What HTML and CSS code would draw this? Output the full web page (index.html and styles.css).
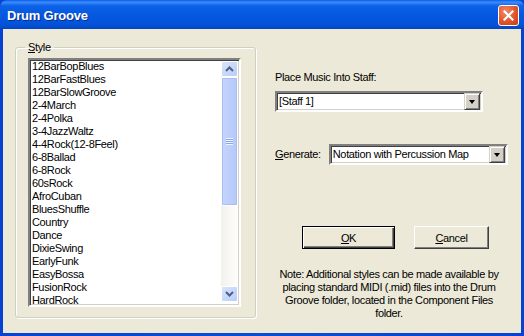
FILE: index.html
```html
<!DOCTYPE html>
<html>
    <head>
        <title>Drum Groove</title>
        <meta name="viewport" content="width=device-width, initial-scale=1">
        <link rel="stylesheet" href="styles.css">
    </head>
    <body>
        <div class="window">
            <div class="titlebar">
                <span class="title">Drum Groove</span>
                <button class="close" aria-label="Close">
                    <svg width="11" height="11" viewBox="0 0 11 11">
                        <path d="M1.5 1.5 L9.5 9.5 M9.5 1.5 L1.5 9.5" stroke="#fff" stroke-width="2.2" stroke-linecap="square"/>
                    </svg>
                </button>
            </div>

            <div class="content">
                <fieldset class="group">
                    <legend><u>S</u>tyle</legend>
                    <div class="listbox">
                        <ul class="items">
                            <li>12BarBopBlues</li>
                            <li>12BarFastBlues</li>
                            <li>12BarSlowGroove</li>
                            <li>2-4March</li>
                            <li>2-4Polka</li>
                            <li>3-4JazzWaltz</li>
                            <li>4-4Rock(12-8Feel)</li>
                            <li>6-8Ballad</li>
                            <li>6-8Rock</li>
                            <li>60sRock</li>
                            <li>AfroCuban</li>
                            <li>BluesShuffle</li>
                            <li>Country</li>
                            <li>Dance</li>
                            <li>DixieSwing</li>
                            <li>EarlyFunk</li>
                            <li>EasyBossa</li>
                            <li>FusionRock</li>
                            <li>HardRock</li>
                        </ul>
                        <div class="scrollbar">
                            <div class="sb-btn">
                                <svg width="9" height="6" viewBox="0 0 9 6"><path d="M1 5 L4.5 1.5 L8 5" fill="none" stroke="#4d6185" stroke-width="2"/></svg>
                            </div>
                            <div class="sb-track">
                                <div class="sb-thumb">
                                    <span class="grip"></span>
                                </div>
                            </div>
                            <div class="sb-btn">
                                <svg width="9" height="6" viewBox="0 0 9 6"><path d="M1 1 L4.5 4.5 L8 1" fill="none" stroke="#4d6185" stroke-width="2"/></svg>
                            </div>
                        </div>
                    </div>
                </fieldset>

                <div class="side">
                    <div class="label">Place Music Into Staff:</div>
                    <div class="combo staff">
                        <span class="value">[Staff 1]</span>
                        <span class="drop"><span class="tri"></span></span>
                    </div>

                    <div class="gen-row">
                        <span class="label"><u>G</u>enerate:</span>
                        <div class="combo generate">
                            <span class="value">Notation with Percussion Map</span>
                            <span class="drop"><span class="tri"></span></span>
                        </div>
                    </div>

                    <div class="buttons">
                        <button class="btn ok"><span><u>O</u>K</span></button>
                        <button class="btn cancel"><u>C</u>ancel</button>
                    </div>

                    <p class="note">Note: Additional styles can be made available by placing standard MIDI (.mid) files into the Drum Groove folder, located in the Component Files folder.</p>
                </div>
            </div>
        </div>
    </body>
</html>
```

FILE: styles.css
```css
body, html {
    margin: 0;
    width: 524px;
    height: 336px;
    overflow: hidden;
    background-color: #ece9d8;
}

.window {
    width: 524px;
    height: 336px;
    box-sizing: border-box;
    display: flex;
    flex-direction: column;
    background-color: #0a246a;
    background: linear-gradient(to right, #0842d4, #0a4ed8 50%, #0842d4);
    font-family: "Liberation Sans", Arial, sans-serif;
    font-size: 11px;
    letter-spacing: -0.35px;
    color: #000;
    padding: 0 3px 3px 3px;
}

/* title bar */
.titlebar {
    height: 29px;
    margin: 0 -3px;
    padding: 0 5px 0 7px;
    display: flex;
    align-items: center;
    justify-content: space-between;
    background: linear-gradient(to bottom, #0a5ff2 0%, #3d8bf7 8%, #0b62e8 20%, #0558e0 50%, #0353d8 85%, #0345c2 100%);
    border-radius: 7px 7px 0 0;
}

.title {
    color: white;
    font-weight: bold;
    font-size: 13px;
    letter-spacing: -0.2px;
    text-shadow: 1px 1px 0 #0a2e8c;
    margin-top: 1px;
}

.close {
    width: 21px;
    height: 21px;
    padding: 0;
    margin-top: 1px;
    border: 1px solid #fff;
    border-radius: 3px;
    background: radial-gradient(circle at 35% 30%, #f08a6a, #e2542c 55%, #c53c15);
    display: flex;
    align-items: center;
    justify-content: center;
}

/* client area */
.content {
    flex: 1;
    display: flex;
    background-color: #ece9d8;
}

.group {
    margin: 12px 0 0 12px;
    width: 241px;
    height: 277px;
    box-sizing: border-box;
    padding: 0;
    border: 1px solid #d0d0bf;
    border-radius: 3px;
    box-shadow: inset 1px 1px 0 #fff, 1px 1px 0 #fff;
}

.group legend {
    padding: 0 3px;
    margin-left: 9px;
    line-height: 13px;
}

.listbox {
    display: flex;
    margin: 4px 0 0 12px;
    width: 213px;
    height: 249px;
    box-sizing: border-box;
    border: 2px solid;
    border-color: #808080 #fff #fff #808080;
    box-shadow: inset 1px 1px 0 #404040, inset -1px -1px 0 #d4d0c8;
    background: white;
    overflow: hidden;
}

.items {
    flex: 1;
    list-style: none;
    margin: 0;
    padding: 0 0 0 2px;
}

.items li {
    height: 13px;
    line-height: 13px;
    white-space: nowrap;
}

/* xp scrollbar */
.scrollbar {
    width: 17px;
    margin: 1px 1px 3px 0;
    display: flex;
    flex-direction: column;
    background: linear-gradient(to right, #f3f1ec, #fefefb);
}

.sb-btn {
    height: 16px;
    box-sizing: border-box;
    border: 1px solid #fff;
    border-radius: 2px;
    background: linear-gradient(to bottom right, #d8e4fd, #b9cdfa);
    display: flex;
    align-items: center;
    justify-content: center;
}

.sb-track {
    flex: 1;
}

.sb-thumb {
    height: 129px;
    box-sizing: border-box;
    border: 1px solid #fff;
    outline: 1px solid #a8bdf0;
    outline-offset: -2px;
    border-radius: 2px;
    background: linear-gradient(to right, #c5d5fd, #bbcdfb 60%, #b5c8f8);
    display: flex;
    align-items: center;
    justify-content: center;
}

.grip {
    width: 7px;
    height: 7px;
    background: repeating-linear-gradient(to bottom, #eef3fe 0 1px, #8aa6e8 1px 2px);
}

/* right column */
.side {
    margin-left: 19px;
    width: 233px;
    padding-top: 42px;
}

.label {
    line-height: 13px;
}

.combo {
    height: 21px;
    box-sizing: border-box;
    border: 2px solid;
    border-color: #808080 #fff #fff #808080;
    box-shadow: inset 1px 1px 0 #404040, inset -1px -1px 0 #d4d0c8;
    background: white;
    display: flex;
    align-items: center;
    justify-content: space-between;
    padding: 0 1px 0 2px;
}

.combo .value {
    line-height: 13px;
    white-space: nowrap;
}

.staff {
    width: 208px;
    margin-top: 7px;
}

.drop {
    width: 16px;
    height: 17px;
    box-sizing: border-box;
    background: #d4d0c8;
    border: 1px solid;
    border-color: #d4d0c8 #404040 #404040 #d4d0c8;
    box-shadow: inset 1px 1px 0 #fff, inset -1px -1px 0 #808080;
    display: flex;
    align-items: center;
    justify-content: center;
}

.tri {
    width: 0;
    height: 0;
    border-left: 3.5px solid transparent;
    border-right: 3.5px solid transparent;
    border-top: 4px solid #000;
    margin-top: 1px;
}

.gen-row {
    display: flex;
    align-items: center;
    margin-top: 32px;
}

.gen-row .label {
    width: 54px;
}

.generate {
    width: 180px;
}

.buttons {
    display: flex;
    margin-top: 61px;
}

.btn {
    height: 23px;
    box-sizing: border-box;
    font-family: "Liberation Sans", Arial, sans-serif;
    font-size: 11px;
    letter-spacing: -0.35px;
    padding: 0;
    background: #ece9d8;
    border: 1px solid;
    border-color: #fff #404040 #404040 #fff;
    box-shadow: inset -1px -1px 0 #808080;
}

.ok {
    width: 93px;
    margin-left: 27px;
    border: 1px solid #000;
    box-shadow: inset 1px 1px 0 #fff, inset -1px -1px 0 #404040, inset -2px -2px 0 #808080;
}

.cancel {
    width: 75px;
    margin-left: 19px;
}

.note {
    margin: 19px 3px 0 -2px;
    line-height: 13px;
    text-align: center;
}
```
